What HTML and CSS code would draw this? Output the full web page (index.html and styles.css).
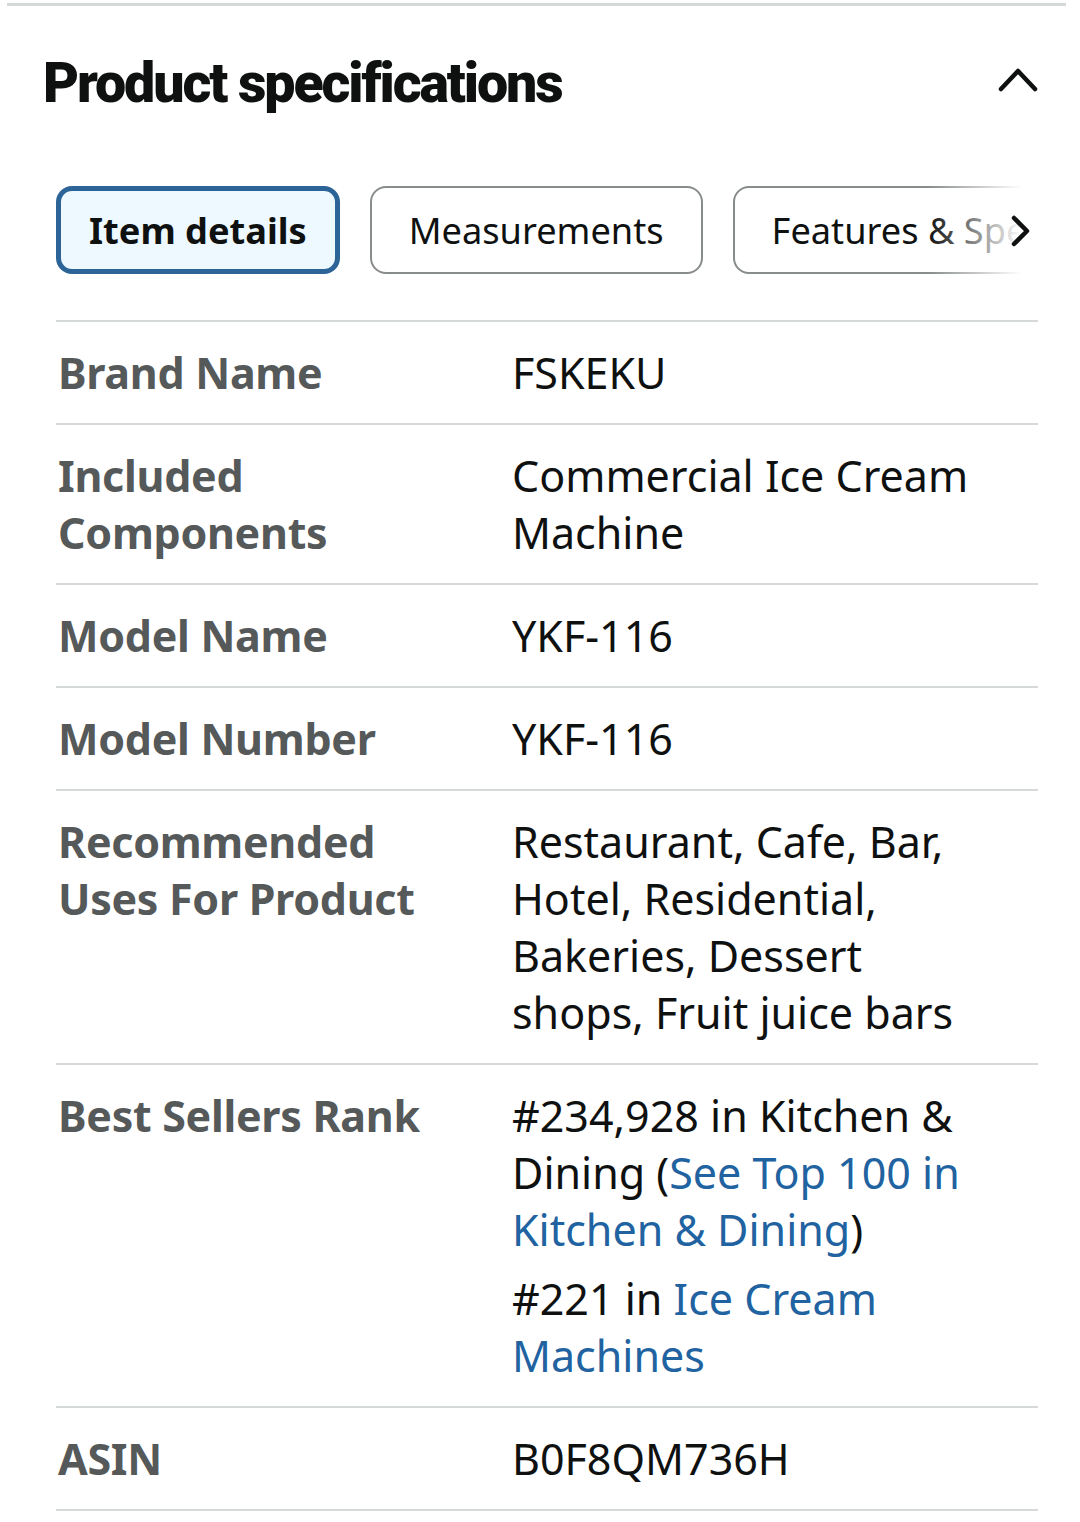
FILE: index.html
```html
<!DOCTYPE html>
<html>
<head>
<meta charset="utf-8">
<link rel="stylesheet" href="styles.css">
</head>
<body>
<div class="topline"></div>
<section class="specs">
  <div class="head">
    <h2 class="title">Product specifications</h2>
    <svg class="caret" width="40" height="26" viewBox="0 0 40 26"><path d="M3 23 L20 5 L37 23" fill="none" stroke="#0f1111" stroke-width="4.5" stroke-linecap="round" stroke-linejoin="round"/></svg>
  </div>
  <div class="tabs">
    <div class="tabtrack">
      <div class="tab active">Item details</div>
      <div class="tab">Measurements</div>
      <div class="tab">Features &amp; Specs</div>
    </div>
    <div class="fade"></div>
    <svg class="next" width="22" height="34" viewBox="0 0 22 34"><path d="M4 4 L17 17 L4 30" fill="none" stroke="#0f1111" stroke-width="4.5" stroke-linecap="round" stroke-linejoin="round"/></svg>
  </div>
  <div class="table">
    <div class="row"><div class="label">Brand Name</div><div class="value">FSKEKU</div></div>
    <div class="row"><div class="label">Included Components</div><div class="value">Commercial Ice Cream Machine</div></div>
    <div class="row"><div class="label">Model Name</div><div class="value">YKF-116</div></div>
    <div class="row"><div class="label">Model Number</div><div class="value">YKF-116</div></div>
    <div class="row"><div class="label">Recommended Uses For Product</div><div class="value">Restaurant, Cafe, Bar, Hotel, Residential, Bakeries, Dessert shops, Fruit juice bars</div></div>
    <div class="row"><div class="label">Best Sellers Rank</div><div class="value">
      <p class="rank">#234,928 in Kitchen &amp; Dining (<a class="link">See Top 100 in Kitchen &amp; Dining</a>)</p>
      <p class="rank">#221 in <a class="link">Ice Cream Machines</a></p>
    </div></div>
    <div class="row"><div class="label">ASIN</div><div class="value">B0F8QM736H</div></div>
  </div>
</section>
</body>
</html>
```
FILE: styles.css
```css
html, body {
  margin: 0;
  padding: 0;
  background: #ffffff;
}
body {
  font-family: "Noto Sans", "Open Sans", sans-serif;
  color: #0f1111;
  width: 1080px;
}
.topline {
  height: 3px;
  margin: 3px 14px 0 7px;
  background: #d5d9d9;
}
.specs {
  padding: 0 42px 0 56px;
}
.head {
  display: flex;
  align-items: center;
  justify-content: space-between;
  height: 154px;
  margin-left: -13px;
}
.title {
  margin: 0;
  font-family: "Roboto", sans-serif;
  font-weight: 900;
  font-size: 55.5px;
  letter-spacing: -2.1px;
  color: #0f1111;
}
.caret {
  margin-right: 0;
  margin-top: -8px;
}
.tabs {
  position: relative;
  margin-top: 26px;
  height: 90px;
  overflow: hidden;
}
.tabtrack {
  display: flex;
  gap: 30px;
  white-space: nowrap;
}
.tab {
  box-sizing: border-box;
  height: 88px;
  padding: 0 37px;
  display: flex;
  align-items: center;
  border: 2px solid #888c8c;
  border-radius: 16px;
  font-size: 36.2px;
  color: #0f1111;
  background: #fff;
}
.tab.active {
  border: 5px solid #2d6498;
  background: #edf8ff;
  font-weight: 700;
  padding: 0 28px;
}
.fade {
  position: absolute;
  right: 0;
  top: 0;
  width: 110px;
  height: 100%;
  background: linear-gradient(to right, rgba(255,255,255,0), #ffffff 85%);
}
.next {
  position: absolute;
  right: 6px;
  top: 28px;
}
.table {
  margin-top: 44px;
  border-top: 2px solid #d5d9d9;
}
.row {
  display: flex;
  border-bottom: 2px solid #d5d9d9;
  padding: 22px 0;
  font-size: 43px;
  line-height: 57px;
}
.label {
  width: 456px;
  flex: none;
  padding-left: 2px;
  box-sizing: border-box;
  padding-right: 40px;
  font-weight: 700;
  color: #565959;
  letter-spacing: -0.3px;
}
.value {
  flex: 1;
  color: #0f1111;
  padding-right: 48px;
}
.rank {
  margin: 0;
}
.rank + .rank {
  margin-top: 12px;
}
.link {
  color: #2162a1;
}
```
